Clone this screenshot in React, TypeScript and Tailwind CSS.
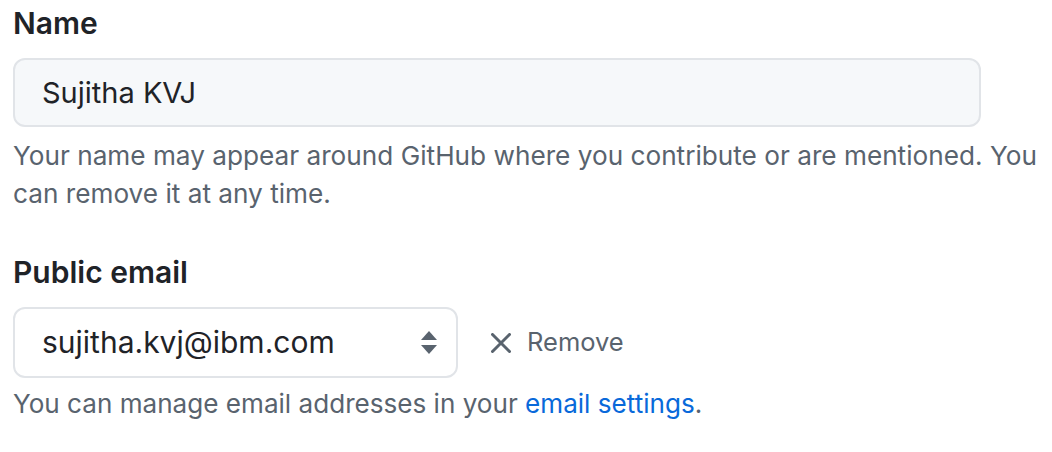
export default function App() {
  return (
    <div className="min-h-screen bg-white font-['Inter','Noto_Sans',sans-serif] text-[#1f2328]">
      <div className="flex w-[1040px] flex-col pl-[13px] pt-[3px]">
        {/* Name */}
        <label className="text-[30px] leading-[40px] font-semibold">Name</label>
        <input
          readOnly
          value="Sujitha KVJ"
          className="mt-[15px] h-[69px] w-[968px] rounded-[12px] border-2 border-[#e1e4e8] bg-[#f6f8fa] px-[27px] text-[29px] text-[#1f2328] outline-none"
        />
        <p className="mt-[10px] text-[26.2px] leading-[38px] text-[#59636e]">
          Your name may appear around GitHub where you contribute or are mentioned. You can remove it at any time.
        </p>

        {/* Public email */}
        <label className="mt-[39px] text-[30px] leading-[40px] font-semibold">Public email</label>
        <div className="mt-[15px] flex items-center">
          <div className="flex h-[71px] w-[445px] items-center justify-between rounded-[12px] border-2 border-[#e1e4e8] bg-white pr-[19px] pl-[27px]">
            <span className="text-[30px]">sujitha.kvj@ibm.com</span>
            <svg width="16" height="23" viewBox="0 0 16 23" className="text-[#59636e]">
              <path d="M8 0 L16 9 H0 Z" fill="currentColor" />
              <path d="M8 23 L16 14 H0 Z" fill="currentColor" />
            </svg>
          </div>
          <button className="ml-[33px] flex items-center gap-[16px] text-[25.5px] text-[#59636e]">
            <svg width="20" height="20" viewBox="0 0 20 20" className="text-[#59636e]">
              <path d="M1.5 1.5 L18.5 18.5 M18.5 1.5 L1.5 18.5" stroke="currentColor" strokeWidth="3" strokeLinecap="round" fill="none" />
            </svg>
            Remove
          </button>
        </div>
        <p className="mt-[7px] text-[26.1px] leading-[38px] text-[#59636e]">
          You can manage email addresses in your <a className="text-[#0969da]">email settings</a>.
        </p>
      </div>
    </div>
  )
}
